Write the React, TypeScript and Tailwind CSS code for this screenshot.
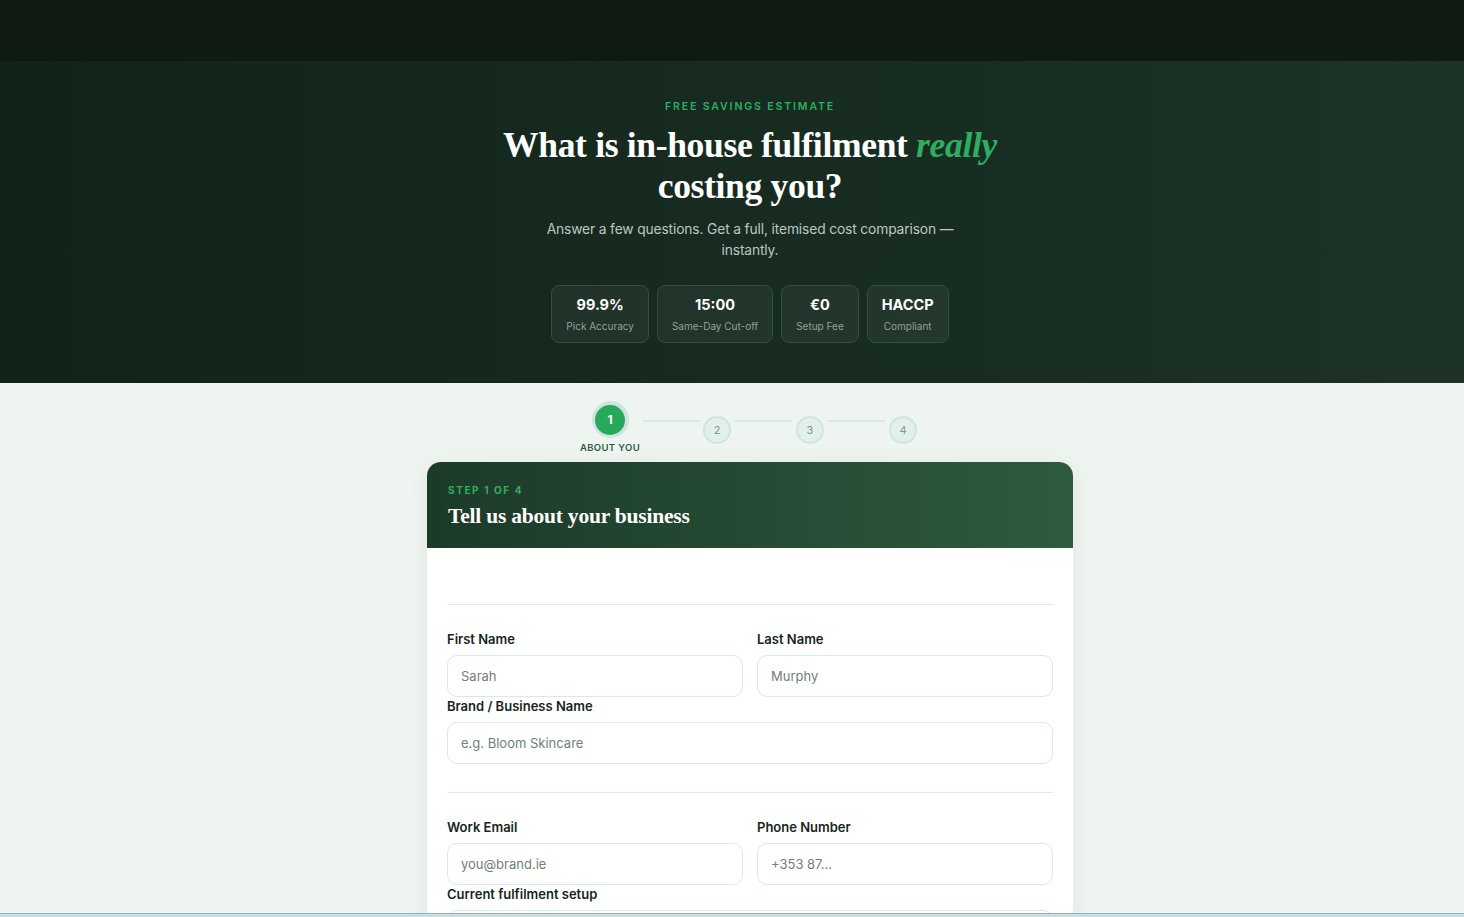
import React from 'react'

const serif = { fontFamily: '"Liberation Serif", "DejaVu Serif", serif' }

const stats = [
  { value: '99.9%', label: 'Pick Accuracy' },
  { value: '15:00', label: 'Same-Day Cut-off' },
  { value: '€0', label: 'Setup Fee' },
  { value: 'HACCP', label: 'Compliant' },
]

const Field = ({ label, placeholder }: { label: string; placeholder: string }) => (
  <div className="flex flex-col">
    <label className="text-[13px] leading-[18px] font-semibold text-[#16261c] mb-[7px]">{label}</label>
    <input
      placeholder={placeholder}
      className="h-[42px] rounded-[10px] border border-[#d8eae5] bg-white px-[13px] text-[13px] text-[#1a2a20] placeholder:text-[#718078] outline-none"
    />
  </div>
)

const StepDot = ({ n }: { n: number }) => (
  <div className="mt-[15px] w-[28px] h-[28px] rounded-full bg-[#e2f0ea] border-2 border-[#cfe5de] flex items-center justify-center text-[11px] text-[#85968f]">
    {n}
  </div>
)

const StepLine = ({ first }: { first?: boolean }) => (
  <div className={first ? 'mt-[19px] w-[57px] h-[2px] bg-[#d6e9e3] mx-[3px]' : 'mt-[19px] w-[57px] h-[2px] bg-[#d6e9e3] mx-[4px]'} />
)

export default function App() {
  return (
    <div className="h-screen overflow-hidden bg-[#eef4f0]" style={{ fontFamily: 'Inter, "Noto Sans", sans-serif' }}>
      <div className="h-[61px] bg-[#0e1a12]" />

      <section className="h-[322px] bg-gradient-to-r from-[#12231a] to-[#1c3326] flex flex-col items-center pt-[38px] pl-[36px]">
        <div className="text-[10.5px] font-semibold tracking-[0.18em] text-[#2fae62]">FREE SAVINGS ESTIMATE</div>
        <h1 className="mt-[10px] text-[35.6px] leading-[41px] font-bold text-white text-center max-w-[540px] tracking-[-0.01em]" style={serif}>
          What is in-house fulfilment <em className="text-[#2fae62]">really</em> costing you?
        </h1>
        <p className="mt-[12px] text-[13.8px] leading-[21px] text-[#bcc8c0] text-center max-w-[420px] tracking-[-0.01em]">
          Answer a few questions. Get a full, itemised cost comparison — instantly.
        </p>
        <div className="mt-[24px] flex gap-[8px]">
          {stats.map((s) => (
            <div
              key={s.label}
              className="h-[58px] px-[14px] rounded-[8px] border border-[#30503b] bg-[#ffffff0d] flex flex-col items-center justify-center"
            >
              <div className="text-[14.5px] font-bold text-white leading-[18px]">{s.value}</div>
              <div className="mt-[6px] text-[10px] text-[#8ea395] leading-[12px]">{s.label}</div>
            </div>
          ))}
        </div>
      </section>

      <div className="flex justify-center pt-[18px] pl-[33px]">
        <div className="flex items-start">
          <div className="w-[60px] flex flex-col items-center">
            <div className="w-[37px] h-[37px] rounded-full bg-[#cfe3e0] flex items-center justify-center">
              <div className="w-[30px] h-[30px] rounded-full bg-[#27a85a] flex items-center justify-center text-[12px] font-bold text-white">
                1
              </div>
            </div>
            <div className="mt-[3px] text-[9.5px] font-semibold tracking-[0.04em] text-[#2e5a45] whitespace-nowrap">ABOUT YOU</div>
          </div>
          <StepLine first />
          <StepDot n={2} />
          <StepLine />
          <StepDot n={3} />
          <StepLine />
          <StepDot n={4} />
        </div>
      </div>

      <div className="flex justify-center mt-[7px] pl-[36px]">
        <div className="w-[646px] rounded-t-[14px] bg-white shadow-[0_4px_24px_rgba(20,50,35,0.06)]">
          <div className="h-[86px] rounded-t-[14px] bg-gradient-to-r from-[#1c3a28] to-[#2e5b3f] px-[21px] pt-[21px]">
            <div className="text-[10px] font-bold tracking-[0.16em] text-[#2fae62] leading-[14px]">STEP 1 OF 4</div>
            <h2 className="mt-[6px] text-[21.5px] font-bold text-white leading-[26px] tracking-[-0.01em]" style={serif}>
              Tell us about your business
            </h2>
          </div>
          <div className="px-[20px] pt-[56px]">
            <div className="border-t border-[#dcede8] pt-[25px] pb-[28px]">
              <div className="grid grid-cols-2 gap-x-[14px]">
                <Field label="First Name" placeholder="Sarah" />
                <Field label="Last Name" placeholder="Murphy" />
              </div>
              <Field label="Brand / Business Name" placeholder="e.g. Bloom Skincare" />
            </div>
            <div className="border-t border-[#dcede8] pt-[25px] pb-[28px]">
              <div className="grid grid-cols-2 gap-x-[14px]">
                <Field label="Work Email" placeholder="you@brand.ie" />
                <Field label="Phone Number" placeholder="+353 87..." />
              </div>
              <Field label="Current fulfilment setup" placeholder="" />
            </div>
          </div>
        </div>
      </div>

      <div className="fixed bottom-0 left-0 right-0 h-[4px] bg-[#c6dfe2] border-t border-[#9ab2b2]" />
    </div>
  )
}
